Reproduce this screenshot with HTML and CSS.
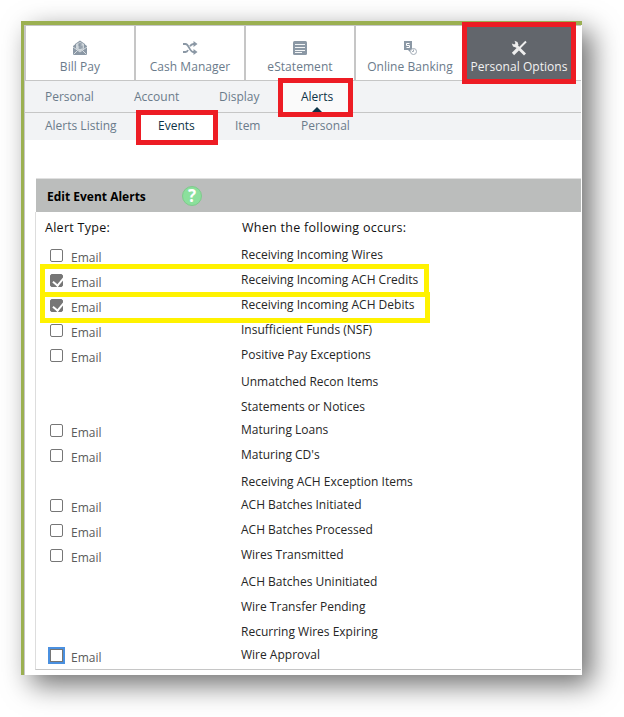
FILE: index.html
```html
<!DOCTYPE html>
<html lang="en">
<head>
<meta charset="utf-8">
<title>Edit Event Alerts</title>
<link rel="stylesheet" href="styles.css">
</head>
<body>
<div class="window">
  <nav class="tabs">
    <a class="tab"><svg width="16" height="16" viewBox="0 0 16 16"><path fill="#8b98a5" d="M1 6l2-1.500V4l5-3.500 5 3.500v.5L15 6v9H1z"/><path fill="#cfd6db" d="M4 4l4-2 4 2v4.500L8 11.500 4 8.500z"/><path fill="none" stroke="#8b98a5" stroke-width="1.200" d="M10 4H7v2h3v2H6.500M8 3v6"/><path fill="none" stroke="#e8ecef" stroke-width=".8" d="M1 7l7 5 7-5M1.500 14.500l4-4M14.500 14.500l-4-4"/></svg><span>Bill Pay</span></a>
    <a class="tab"><svg width="16" height="16" viewBox="0 0 16 16"><path fill="none" stroke="#8b98a5" stroke-width="1.800" d="M1 4h2.500c3.500 0 4 8 8 8h2M1 12h2.500c1 0 2-.8 2.500-2M8 6.300C9 4.500 10 4 11.500 4h2"/><path fill="#8b98a5" d="M11.500 1l4 3-4 3zM11.500 9l4 3-4 3z"/></svg><span>Cash Manager</span></a>
    <a class="tab"><svg width="16" height="16" viewBox="0 0 16 16"><rect x="1" y="1" width="14" height="14" rx="1.500" fill="#8b98a5"/><path stroke="#f3f5f6" d="M3 4.500h10M3 7.500h10M3 10.500h10M3 12.500h7"/></svg><span>eStatement</span></a>
    <a class="tab"><svg width="16" height="16" viewBox="0 0 16 16"><path fill="#8b98a5" d="M2 1h8v9H8v2L6 10H2z"/><path fill="none" stroke="#fff" d="M7.500 3.500h-3v2h3v2h-3"/><circle cx="11.500" cy="11.500" r="3" fill="#fff" stroke="#a3adb7"/><path fill="none" stroke="#a3adb7" d="M11.500 9.500v2H10"/></svg><span>Online Banking</span></a>
    <a class="tab active"><svg width="16" height="16" viewBox="0 0 16 16"><path fill="none" stroke="#eee" stroke-width="2.800" d="M4 4.500l10 10"/><path fill="none" stroke="#eee" stroke-width="1.900" d="M15 1.500L8 8.500"/><path fill="none" stroke="#eee" stroke-width="3.200" d="M7 9l-5 5"/><path fill="#eee" d="M3.500.8l3 1.200 1 3-2.500 2.500-3-1L.8 3.500l2.500 1 1.200-1.200z"/></svg><span>Personal Options</span></a>
  </nav>
  <nav class="subnav first">
    <a class="c1">Personal</a><a class="c2">Account</a><a class="c3">Display</a><a class="c4 selected">Alerts</a>
  </nav>
  <nav class="subnav second">
    <a class="d1">Alerts Listing</a><a class="d2 selected">Events</a><a class="d3">Item</a><a class="d4">Personal</a>
  </nav>
  <main class="panel">
    <header class="panel-head"><h1>Edit Event Alerts</h1><span class="help">?</span></header>
    <div class="cols"><span class="type">Alert Type:</span><span class="when">When the following occurs:</span></div>
    <div class="row"><i class="box"></i><label>Email</label><span>Receiving Incoming Wires</span></div>
    <div class="row"><i class="box on"></i><label>Email</label><span>Receiving Incoming ACH Credits</span></div>
    <div class="row"><i class="box on"></i><label>Email</label><span>Receiving Incoming ACH Debits</span></div>
    <div class="row"><i class="box"></i><label>Email</label><span>Insufficient Funds (NSF)</span></div>
    <div class="row"><i class="box"></i><label>Email</label><span>Positive Pay Exceptions</span></div>
    <div class="row plain"><span>Unmatched Recon Items</span></div>
    <div class="row plain"><span>Statements or Notices</span></div>
    <div class="row"><i class="box"></i><label>Email</label><span>Maturing Loans</span></div>
    <div class="row"><i class="box"></i><label>Email</label><span>Maturing CD's</span></div>
    <div class="row plain"><span>Receiving ACH Exception Items</span></div>
    <div class="row"><i class="box"></i><label>Email</label><span>ACH Batches Initiated</span></div>
    <div class="row"><i class="box"></i><label>Email</label><span>ACH Batches Processed</span></div>
    <div class="row"><i class="box"></i><label>Email</label><span>Wires Transmitted</span></div>
    <div class="row plain"><span>ACH Batches Uninitiated</span></div>
    <div class="row plain"><span>Wire Transfer Pending</span></div>
    <div class="row plain"><span>Recurring Wires Expiring</span></div>
    <div class="row"><i class="box focus"></i><label>Email</label><span>Wire Approval</span></div>
  </main>
</div>
<div class="mark m-options"></div>
<div class="mark m-alerts"></div>
<div class="mark m-events"></div>
<div class="mark m-credits"></div>
<div class="mark m-debits"></div>
</body>
</html>
```
FILE: styles.css
```css
* { box-sizing: border-box; }
body { margin: 0; padding: 21px; width: 624px; height: 717px; overflow: hidden; background: #fff; font: 12px/16px "Open Sans", "Noto Sans", sans-serif; color: #262626; position: relative; }
.window { width: 561px; height: 654px; background: #fff; border-top: 4px solid #9bb051; border-left: 3px solid #9bb051; box-shadow: 10px 10px 26px rgba(0,0,0,.56); padding-right: 1px; display: flex; flex-direction: column; }
.tabs { display: flex; height: 56px; border: solid #c6c6c6; border-width: 1px 0 1px 2px; }
.tab { width: 110px; border-right: 2px solid #c6c6c6; display: flex; flex-direction: column; align-items: center; padding-top: 14px; color: #6b7b8b; font-size: 12px; letter-spacing: .05px; white-space: nowrap; }
.tab svg { flex: none; margin-bottom: 3px; }
.tab.active { background: #62666c; color: #f2f2f2; border: 0; padding-right: 4px; }
.subnav { display: flex; background: #f2f3f5; color: #6b7b8b; font-size: 12px; border-left: 1px solid #c6c6c6; }
.subnav a { white-space: nowrap; position: relative; }
.first { height: 32px; border-bottom: 1px solid #c6c6c6; line-height: 31px; }
.second { height: 27px; line-height: 26px; }
.c1 { width: 109px; padding-left: 20px; }
.c2 { width: 85px; }
.c3 { width: 62px; }
.c4 { width: 70px; padding-left: 20px; }
.d1 { width: 114px; padding-left: 20px; }
.d2 { width: 75px; padding-left: 19px; }
.d3 { width: 87px; padding-left: 21px; }
.selected { color: #0d3347; background: #fafafa; }
.d2.selected { background: #fff; }
.c4::after { content: ""; position: absolute; left: 31px; bottom: 0; border: solid transparent; border-width: 0 5px 5px; border-bottom-color: #0d3347; }
.panel { flex: 1; padding: 38px 0 0 10px; border-left: 1px solid #c6c6c6; }
.panel-head { height: 34px; margin-left: 1px; background: #bbbdbc; border-top: 1px solid #e0e0e0; display: flex; align-items: center; padding-left: 11px; }
h1 { margin: 0; font: bold 12px/16px "Open Sans", sans-serif; color: #000; width: 135px; padding-top: 2px; }
.help { width: 20px; height: 20px; border-radius: 50%; background: #8be09c; border: 1px solid #7fca8c; color: #fff; font: bold 17px/18px "Open Sans", sans-serif; text-align: center; }
.cols { height: 31px; display: flex; border-left: 1px solid #ddd; padding: 8px 0 0 9px; color: #111; font-size: 12.5px; letter-spacing: .28px; }
.type { width: 197px; }
.row { height: 25px; display: flex; border-left: 1px solid #ddd; padding-left: 14px; }
.row:last-child { height: 27px; border-bottom: 1px solid #c6c6c6; }
.row span { padding-top: 4px; }
.row label { width: 170px; padding-top: 7px; color: #5a5a5a; }
.row.plain { padding-left: 205px; }
.row.plain span { padding-top: 6px; }
.box { flex: none; width: 13px; height: 13px; margin: 6px 8px 0 0; border: 1px solid #767676; border-radius: 2px; background: #fff; position: relative; }
.box.on { background: #767676; }
.box.on::after { content: ""; position: absolute; left: 3.500px; top: -.5px; width: 5px; height: 9px; border: solid #fff; border-width: 0 2px 2px 0; transform: rotate(40deg); }
.box.focus { border-radius: 0; outline: 2px solid #4a90e0; }
.mark { position: absolute; border: 5px solid #ed1c24; }
.m-options { left: 462px; top: 22px; width: 114px; height: 62px; }
.m-alerts { left: 278px; top: 78px; width: 75px; height: 39px; }
.m-events { left: 136px; top: 110px; width: 82px; height: 35px; }
.m-credits { left: 40px; top: 264px; width: 389px; height: 33px; border-color: #fff200; }
.m-debits { left: 40px; top: 292px; width: 390px; height: 31px; border-color: #fff200; }
```
